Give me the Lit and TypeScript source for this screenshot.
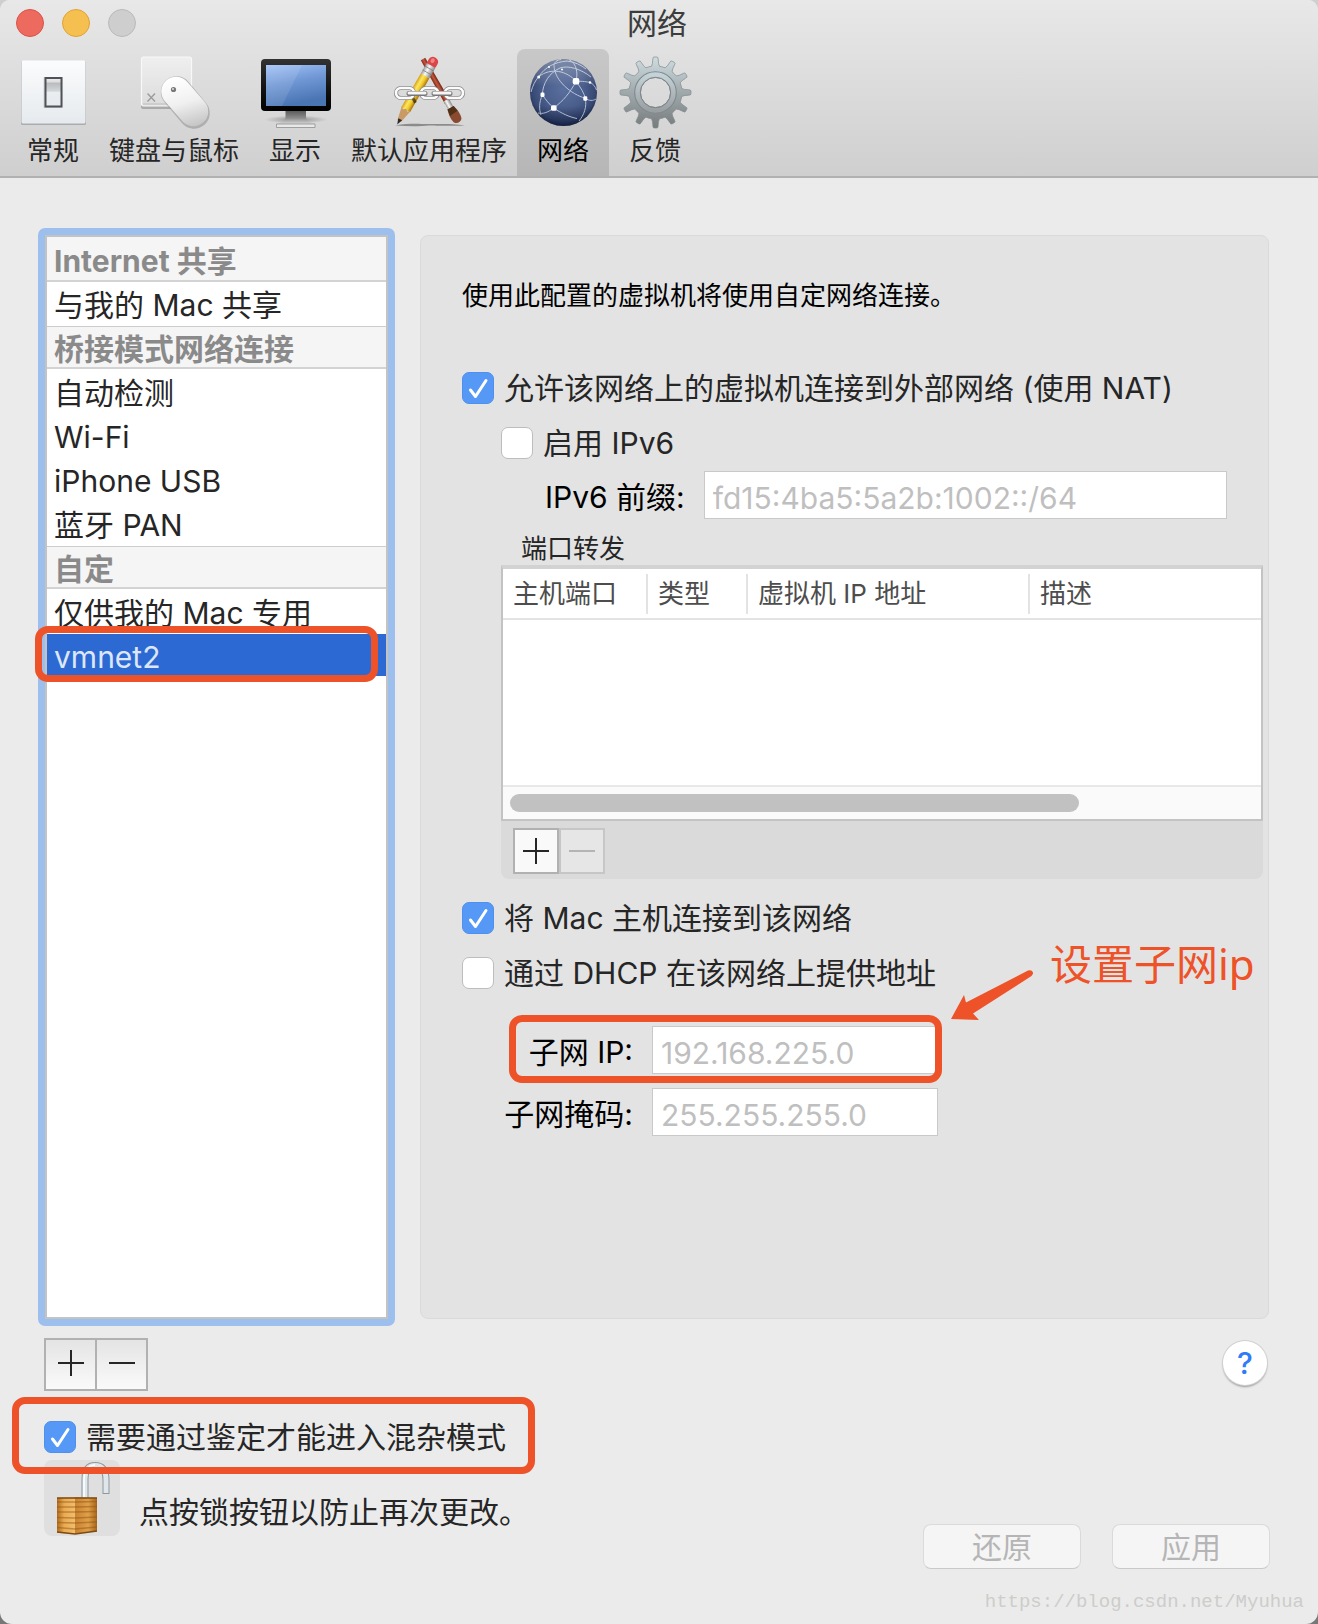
import { LitElement, html, svg, css, nothing, TemplateResult } from "lit";
import { customElement, state } from "lit/decorators.js";
import { classMap } from "lit/directives/class-map.js";

/** Outline of a toothed wheel around (cx, cy). */
function gearPath(cx: number, cy: number, teeth: number, outer: number, inner: number): string {
  const step = (Math.PI * 2) / teeth;
  const at = (r: number, a: number) =>
    `${(cx + r * Math.sin(a)).toFixed(2)} ${(cy - r * Math.cos(a)).toFixed(2)}`;
  let d = "";
  for (let i = 0; i < teeth; i++) {
    const a = i * step;
    d += `${i ? "L" : "M"}${at(inner, a - step * 0.29)}`;
    d += `Q${at(inner + 2, a - step * 0.19)} ${at(outer - 2, a - step * 0.15)}`;
    d += `Q${at(outer, a - step * 0.15)} ${at(outer, a - step * 0.08)}`;
    d += `L${at(outer, a + step * 0.08)}`;
    d += `Q${at(outer, a + step * 0.15)} ${at(outer - 2, a + step * 0.15)}`;
    d += `Q${at(inner + 2, a + step * 0.19)} ${at(inner, a + step * 0.29)}`;
    d += `A${inner} ${inner} 0 0 1 ${at(inner, a + step * 0.71)}`;
  }
  return d + "Z";
}

const icons: Record<string, TemplateResult> = {
  general: svg`
    <defs>
      <linearGradient id="plate" x2="0" y2="1"><stop stop-color="#fbfcfd"/><stop offset="1" stop-color="#e6eaee"/></linearGradient>
      <linearGradient id="rocker" x2="0" y2="1"><stop stop-color="#eeeeee"/><stop offset=".14" stop-color="#dcdcdc"/><stop offset=".18" stop-color="#b9bbbe"/><stop offset=".46" stop-color="#d3d6d9"/><stop offset=".5" stop-color="#e9edf0"/><stop offset="1" stop-color="#e6ebef"/></linearGradient>
    </defs>
    <rect x="4" y="6" width="65" height="64" rx="1.5" fill="#a9adb2"/>
    <rect x="4.500" y="5.500" width="64" height="63" rx="1.500" fill="url(#plate)"/>
    <rect x="26.500" y="22" width="19" height="31" rx="1" fill="#000" opacity=".12"/>
    <rect x="28.500" y="23" width="16" height="28.500" fill="url(#rocker)" stroke="#505257" stroke-width="2"/>`,
  input: svg`
    <defs>
      <linearGradient id="pad" x2="0" y2="1"><stop stop-color="#efefef"/><stop offset="1" stop-color="#dcdcdc"/></linearGradient>
      <linearGradient id="mouse" gradientUnits="userSpaceOnUse" x1="42" y1="22" x2="56" y2="72"><stop stop-color="#fff"/><stop offset=".5" stop-color="#f0f0f0"/><stop offset="1" stop-color="#c4c4c4"/></linearGradient>
    </defs>
    <rect x="3" y="4" width="51" height="50" rx="2" fill="#aaa"/>
    <rect x="3.500" y="2" width="50" height="49" rx="2" fill="url(#pad)" stroke="#f8f8f8" stroke-width="1.200"/>
    <path d="M5 49H52" stroke="#bdbdbd"/>
    <path d="M9.500 38.500l7.500 8M17 38.500l-7.500 8" stroke="#9a9a9a" stroke-width="1.300" fill="none"/>
    <path d="M38.500 37L56 58" stroke="#8e8e8e" stroke-opacity=".55" stroke-width="31.500" stroke-linecap="round"/>
    <path d="M38 36.500L55.500 56.500" stroke="url(#mouse)" stroke-width="29.500" stroke-linecap="round"/>
    <circle cx="35.500" cy="34.500" r="2.600" fill="#777"/><circle cx="35" cy="34" r="1" fill="#ddd"/>`,
  display: svg`
    <defs>
      <linearGradient id="screen" x2=".3" y2="1"><stop stop-color="#a3c3f8"/><stop offset=".5" stop-color="#6f97d4"/><stop offset="1" stop-color="#4a75b4"/></linearGradient>
      <linearGradient id="bezel" x2="0" y2="1"><stop stop-color="#333"/><stop offset=".6" stop-color="#111"/><stop offset="1" stop-color="#000"/></linearGradient>
      <linearGradient id="neck" x2="0" y2="1"><stop stop-color="#555"/><stop offset=".45" stop-color="#8c8c8c"/><stop offset=".75" stop-color="#d0d0d0"/></linearGradient>
      <radialGradient id="footshade"><stop stop-color="#000" stop-opacity=".35"/><stop offset="1" stop-color="#000" stop-opacity="0"/></radialGradient>
    </defs>
    <ellipse cx="37" cy="64.500" rx="32" ry="4" fill="url(#footshade)"/>
    <path d="M26.500 55H47V62C47 66 50 67 56 69V73H17.500V69C23 67 26.500 66 26.500 62Z" fill="url(#neck)"/>
    <path d="M17.500 69H56V72.500H17.500Z" fill="#e8e8e8" stroke="#8f8f8f" stroke-width=".8"/>
    <rect x="2" y="4" width="70" height="52" rx="4" fill="url(#bezel)"/>
    <rect x="7" y="10" width="60" height="41" fill="url(#screen)"/>
    <path d="M7 10H43L23 51H7Z" fill="#fff" opacity=".1"/>`,
  apps: svg`
    <defs>
      <linearGradient id="wood"><stop stop-color="#d99e18"/><stop offset=".35" stop-color="#fbe75e"/><stop offset=".65" stop-color="#f0c92d"/><stop offset="1" stop-color="#a87008"/></linearGradient>
      <linearGradient id="metal"><stop stop-color="#999"/><stop offset=".4" stop-color="#fafafa"/><stop offset="1" stop-color="#888"/></linearGradient>
      <linearGradient id="brush"><stop stop-color="#7a2413"/><stop offset=".5" stop-color="#c4583f"/><stop offset="1" stop-color="#6a1c0e"/></linearGradient>
    </defs>
    <path d="M2 70.500C20 67.500 30 69.500 36 69C45 69.500 55 68 72 70.500C50 71.500 40 70 36 70.500C28 71.500 14 71.500 2 70.500Z" fill="#000" opacity=".35"/>
    <g transform="translate(30 4) rotate(-29.500)">
      <path d="M-2.500 0H2.500L3 50H-3Z" fill="url(#brush)"/>
      <rect x="-3" y="47" width="6" height="10" fill="url(#metal)"/>
      <path d="M-3.500 56H3.500C5.500 62 5.500 68 4 71C2 73.500 -2 73.500 -4 71C-5.500 68 -5.500 62 -3.500 56Z" fill="#8a4a30"/>
      <path d="M-3.500 56H3.500L4.500 62L-4.500 63Z" fill="#4f3018"/>
    </g>
    <g transform="translate(40 7) rotate(29.800)">
      <rect x="-5" y="-5" width="10" height="12" rx="4.500" fill="#dc4547"/>
      <ellipse cx="-1" cy="-1" rx="2" ry="2.500" fill="#f08684"/>
      <rect x="-5" y="4" width="10" height="12" fill="url(#metal)"/>
      <path d="M-5 7.500H5M-5 12H5" stroke="#777" stroke-width=".7"/>
      <path d="M-5 16H5V55H-5Z" fill="url(#wood)"/>
      <path d="M-5 54L-2.500 56L0 54L2.500 56L5 54L2 68H-2Z" fill="#c99a64"/>
      <path d="M-2.200 66H2.200L0 72Z" fill="#2a2a2a"/>
      <path d="M-5 38L5 44" stroke="#000" stroke-width="3" opacity=".55"/>
    </g>
    <g fill="none">
      <g stroke="#8b8b8b" stroke-width="4.200">
        <rect x="3" y="33" width="18" height="10" rx="5"/><rect x="28" y="33" width="17" height="10" rx="5"/><rect x="52" y="33" width="18" height="10" rx="5"/>
      </g>
      <g stroke="#fbfbfb" stroke-width="2.600">
        <rect x="3" y="33" width="18" height="10" rx="5"/><rect x="28" y="33" width="17" height="10" rx="5"/><rect x="52" y="33" width="18" height="10" rx="5"/>
      </g>
      <path d="M16 38.500H32M41 38.500H57" stroke="#777" stroke-width="5" stroke-linecap="round"/>
      <path d="M16 38H32M41 38H57" stroke="#f6f6f6" stroke-width="3" stroke-linecap="round"/>
    </g>`,
  network: svg`
    <defs>
      <radialGradient id="globe" cx=".5" cy=".45" r=".56"><stop stop-color="#5b6f9e"/><stop offset=".55" stop-color="#4a5e8c"/><stop offset=".85" stop-color="#364872"/><stop offset="1" stop-color="#1d2a4a"/></radialGradient>
      <linearGradient id="gloss" x2="0" y2="1"><stop stop-color="#fff" stop-opacity=".35"/><stop offset=".4" stop-color="#fff" stop-opacity="0"/><stop offset=".7" stop-color="#0a1230" stop-opacity="0"/><stop offset="1" stop-color="#0a1230" stop-opacity=".5"/></linearGradient>
    </defs>
    <circle cx="36.500" cy="37.500" r="33.500" fill="url(#globe)"/>
    <circle cx="36.500" cy="37.500" r="33.500" fill="url(#gloss)"/>
    <g fill="none" stroke="#e6ecf8" stroke-width="1" opacity=".7">
      <path d="M49 26.300C43 38 36 46 26.700 53"/>
      <path d="M15.300 39.700C19 45 22 49 26.700 53C34 58 42 62 50 63.500"/>
      <path d="M26.700 53C20 58 16 59 11 58"/>
      <path d="M15.300 39.700C12 48 12 54 14 60"/>
      <path d="M15.300 39.700C16 28 22 18 33 13C41 10 54 14 64 22"/>
      <path d="M49 26.300C54 33 57 38 58.300 43.300C62 46 66 46 69 44"/>
      <path d="M58.300 43.300C44 39 28 26 27 11C27 7 30 5 34 4.500"/>
      <path d="M49 26.300C51 18 50 9 42 4.500"/>
      <path d="M49 26.300C40 16 24 12 11.700 21.700C8 26 6 30 4 37"/>
      <path d="M49 26.300C56 26 60 27 63 27.300C66 29 68 31 69.500 35"/>
      <path d="M11.700 21.700C18 12 28 7 40 6C48 7 54 10 59 14"/>
      <path d="M58.300 43.300C60 52 57 60 52 66"/>
    </g>
    <g fill="#fff">
      <rect x="45.700" y="23" width="6.600" height="6.600" rx="2"/><rect x="56.300" y="41.200" width="4" height="4.600" rx="1.200"/>
      <rect x="13.500" y="37.500" width="4" height="4.500" rx="1.200"/><rect x="24" y="50.300" width="5.600" height="5.400" rx="1.500"/>
      <circle cx="11.700" cy="22" r="1.500"/><circle cx="63" cy="27.500" r="1.200"/><circle cx="22" cy="12" r="1"/><circle cx="35" cy="14.500" r="1"/>
    </g>`,
  feedback: svg`
    <defs>
      <linearGradient id="steel" x2="0" y2="1"><stop stop-color="#cfdde1"/><stop offset=".5" stop-color="#9fa9ac"/><stop offset="1" stop-color="#777b7d"/></linearGradient>
      <linearGradient id="rim" x2="0" y2="1"><stop stop-color="#c5d3d8"/><stop offset="1" stop-color="#9a9fa2"/></linearGradient>
    </defs>
    <path d="${gearPath(36.5, 37.5, 12, 35.5, 26.5)}M36.500 22.500a15 15 0 1 0 0 30a15 15 0 1 0 0-30Z" fill="url(#steel)" fill-rule="evenodd" stroke="#838b8e" stroke-width=".7"/>
    <circle cx="36.500" cy="37.500" r="18" fill="none" stroke="url(#rim)" stroke-width="5"/>
    <circle cx="36.500" cy="37.500" r="20.800" fill="none" stroke="#808a8e" stroke-width="1.100"/>
    <circle cx="36.500" cy="37.500" r="15.200" fill="none" stroke="#7d8588" stroke-width="1"/>`,
};

const tools = [
  { id: "general", label: "常规" },
  { id: "input", label: "键盘与鼠标" },
  { id: "display", label: "显示" },
  { id: "apps", label: "默认应用程序" },
  { id: "network", label: "网络" },
  { id: "feedback", label: "反馈" },
];

const groups = [
  { title: "Internet 共享", items: ["与我的 Mac 共享"] },
  { title: "桥接模式网络连接", items: ["自动检测", "Wi-Fi", "iPhone USB", "蓝牙 PAN"] },
  { title: "自定", items: ["仅供我的 Mac 专用", "vmnet2"] },
];

const plus = html`<svg class="sign" viewBox="0 0 26 26" aria-hidden="true"><path d="M0 13H26M13 0V26" /></svg>`;
const minus = html`<svg class="sign" viewBox="0 0 26 26" aria-hidden="true"><path d="M0 13H26" /></svg>`;

@customElement("app-root")
export class AppRoot extends LitElement {
  static styles = css`
    :host {
      display: block;
      background: linear-gradient(#cfcfcf, #777);
      font-family: Inter, "Noto Sans CJK SC", sans-serif;
      font-size: 30px;
      line-height: 32px;
      color: #262626;
    }
    * { box-sizing: border-box; }
    button, input { font: inherit; color: inherit; margin: 0; padding: 0; border: 0; border-radius: 0; }
    button { background: none; }
    h1, h2, p, ul { margin: 0; padding: 0; font-weight: 400; font-size: inherit; list-style: none; }

    .window {
      display: flex;
      flex-direction: column;
      min-height: 100vh;
      position: relative;
      background: #ebebeb;
      border-radius: 10px 10px 12px 12px;
      overflow: hidden;
    }
    .bar {
      background: linear-gradient(#e8e8e8, #cfcfcf);
      border-bottom: 2px solid #b1b1b1;
    }
    .titlebar {
      display: grid;
      grid-template-columns: 1fr auto 1fr;
      align-items: center;
      height: 46px;
      margin-bottom: 3px;
      padding: 0 20px 0 16px;
    }
    .lights { display: flex; gap: 18px; }
    .light { width: 28px; height: 28px; border-radius: 50%; border: 1px solid #b9b9b9; background: #cecece; }
    .close { background: #ed6a5f; border-color: #dd5147; }
    .minimize { background: #f5c04f; border-color: #dfa334; }
    .title { color: #3c3c3c; }
    .tools { display: flex; padding-left: 7px; }
    .tool {
      display: flex;
      flex-direction: column;
      align-items: center;
      gap: 9px;
      padding: 6px 10px 10px;
      font-size: 26px;
      line-height: 30px;
      border-radius: 8px 8px 0 0;
    }
    .tool svg { width: 72px; height: 72px; overflow: visible; }
    .tool.on { background: linear-gradient(#c8c8c8, #b6b6b6); color: #000; }

    .content { flex: 1; display: flex; gap: 25px; padding: 50px 49px 0 38px; }
    .ring { width: 357px; padding: 7px; background: #9dbfee; border-radius: 7px; }
    .list { height: 100%; background: #fff; border: 2px solid #c3c3c3; }
    .group-title {
      height: 43px;
      margin-bottom: 1px;
      padding: 0 7px;
      line-height: 44px;
      background: #f5f5f5;
      border-top: 1px solid #cdcdcd;
      border-bottom: 2px solid #d3d3d3;
      color: #8a8a8a;
      font-weight: 700;
    }
    .group:first-child .group-title { height: 45px; margin-bottom: 0; border-top-color: #f5f5f5; line-height: 46px; }
    .entry { position: relative; height: 44px; }
    .entry button { display: block; width: 100%; height: 42px; padding: 0 7px; line-height: 46px; text-align: left; }
    .entry.on button { background: #2c69d3; color: #dde6f7; }
    .mark { position: absolute; border: 7px solid #ee5228; border-radius: 13px; pointer-events: none; }
    .mark-entry { inset: -8px 8px -4px -12px; }

    .panel {
      flex: 1;
      min-width: 0;
      margin: 7px 0;
      padding: 42px 5px 0 41px;
      background: #e3e3e3;
      border: 1px solid #dadada;
      border-radius: 8px;
    }
    .intro { margin-bottom: 58px; font-size: 26px; line-height: 36px; color: #000; }
    .check { display: flex; align-items: center; gap: 10px; width: fit-content; }
    .check + .check { margin-top: 23px; }
    .tick { display: grid; flex: none; }
    .tick > * { grid-area: 1 / 1; width: 32px; height: 32px; }
    .tick input { appearance: none; background: #fff; border: 1px solid #bdbdbd; border-radius: 7px; }
    .tick input:checked { background: #5698f5; border-color: #4f90ee; }
    .tick svg { pointer-events: none; fill: none; stroke: #fff; stroke-width: 3; stroke-linecap: round; stroke-linejoin: round; }
    .nested { padding-left: 39px; }
    .check + .nested { margin-top: 23px; }
    .field { display: flex; align-items: center; gap: 19px; color: #000; }
    .field label { padding-top: 4px; }
    .field input {
      height: 48px;
      min-width: 0;
      padding: 6px 8px 0;
      background: #fff;
      border: 1px solid #c9c9c9;
      color: #bfbfbf;
    }
    .prefix { margin: 12px 36px 14px 44px; }
    .prefix input { flex: 1; }
    .caption { padding-left: 20px; font-size: 26px; line-height: 32px; }
    .ports { margin-bottom: 23px; background: #dadada; border-radius: 8px; }
    .grid { border: solid #c3c3c3; border-width: 4px 2px 2px; border-top-color: #d2d2d2; background: #fff; }
    table { width: 100%; border-collapse: collapse; table-layout: fixed; font-size: 26px; color: #4d4d4d; }
    thead { border-bottom: 2px solid #e3e3e3; }
    th { height: 50px; padding: 0; font-weight: 400; text-align: left; }
    th span { display: block; padding: 0 0 0 10px; line-height: 40px; white-space: nowrap; border-right: 2px solid #e3e3e3; }
    th:last-child span { border-right: 0; }
    .w-port { width: 145px; }
    .w-type { width: 100px; }
    .w-addr { width: 282px; }
    .blank td { height: 166px; padding: 0; }
    .track { height: 34px; padding: 7px; background: #fafafa; border-top: 2px solid #e8e8e8; }
    .thumb { width: calc(100% * 13 / 17); height: 18px; border-radius: 9px; background: #c1c1c1; }
    .pair { display: flex; }
    .pair button { display: grid; place-items: center; border: 2px solid #b1b1b1; background: linear-gradient(#e4e4e4, #fafafa); }
    .large button + button { margin-left: -2px; }
    .sign { width: 26px; height: 26px; fill: none; stroke: #262626; stroke-width: 2; }
    .small { padding: 7px 12px 5px; }
    .small button { width: 46px; height: 46px; background: #f9f9f9; }
    .small button:disabled { border-color: #c6c6c6; background: #e6e6e6; }
    .small button:disabled .sign { stroke: #b4b4b4; }
    .subnet { position: relative; width: 476px; display: grid; gap: 14px; margin-top: 37px; }
    .subnet .field { justify-content: flex-end; }
    .subnet input { width: 286px; }
    .mark-subnet { inset: -11px -4px 53px 47px; }
    .arrow { position: absolute; left: 487px; top: -59px; width: 86px; height: 54px; fill: #ee5228; }
    .note {
      position: absolute;
      left: 588px;
      top: -87px;
      font: 42px/50px "Noto Sans", "Noto Sans CJK SC", sans-serif;
      color: #ee5228;
      white-space: nowrap;
    }

    .footer { display: flex; justify-content: space-between; padding: 12px 48px 0 44px; }
    .left { display: flex; flex-direction: column; align-items: flex-start; padding-bottom: 88px; }
    .large button { width: 53px; height: 53px; padding-bottom: 4px; }
    .promiscuous { position: relative; margin: 30px 0 7px; }
    .mark-promiscuous { inset: -24px -29px -21px -32px; }
    .locking { display: flex; align-items: flex-end; gap: 19px; }
    .lock { width: 76px; height: 76px; border-radius: 8px; background: #dfdfdf; }
    .lock svg { display: block; width: 76px; height: 76px; }
    .locking p { line-height: 48px; }
    .right { display: flex; flex-direction: column; justify-content: space-between; align-items: flex-end; padding-bottom: 55px; }
    .help {
      width: 44px;
      height: 44px;
      margin: 3px 3px 0 0;
      border-radius: 50%;
      background: #fff;
      box-shadow: 0 0 0 1px #d0d0d0, 0 2px 2px #999;
      color: #2f7cf6;
      font-weight: 500;
    }
    .actions { display: flex; gap: 31px; }
    .actions button {
      width: 158px;
      height: 45px;
      background: #f5f5f5;
      border: 1px solid #dadada;
      border-bottom-color: #c9c9c9;
      border-radius: 8px;
      color: #b5b5b5;
    }
    .watermark {
      position: absolute;
      right: 14px;
      bottom: 10px;
      font: 19px/24px "Liberation Mono", monospace;
      color: #cdcdca;
    }
  `;

  @state() private tool = "network";
  @state() private network = "vmnet2";

  private check(label: string, checked: boolean, extra: unknown = nothing, cls = "") {
    return html`<label class="check ${cls}">
      <span class="tick">
        <input type="checkbox" .checked=${checked} />
        ${checked ? html`<svg viewBox="0 0 32 32" aria-hidden="true"><path d="M8.500 18L13.500 24.500L24 8.500" /></svg>` : nothing}
      </span>
      <span>${label}</span>${extra}
    </label>`;
  }

  private renderBar() {
    return html`<header class="bar">
      <div class="titlebar">
        <div class="lights">
          <button class="light close" aria-label="关闭"></button>
          <button class="light minimize" aria-label="最小化"></button>
          <button class="light" aria-label="缩放" disabled></button>
        </div>
        <h1 class="title">网络</h1>
      </div>
      <nav class="tools">
        ${tools.map(
          (t) => html`<button class=${classMap({ tool: true, on: t.id === this.tool })} @click=${() => (this.tool = t.id)}>
            <svg viewBox="0 0 72 72" aria-hidden="true">${icons[t.id]}</svg>
            <span>${t.label}</span>
          </button>`
        )}
      </nav>
    </header>`;
  }

  private renderList() {
    return html`<div class="ring">
      <div class="list">
        ${groups.map(
          (g) => html`<section class="group">
            <h2 class="group-title">${g.title}</h2>
            <ul>
              ${g.items.map(
                (name) => html`<li class=${classMap({ entry: true, on: name === this.network })}>
                  <button @click=${() => (this.network = name)}>${name}</button>
                  ${name === "vmnet2" ? html`<span class="mark mark-entry"></span>` : nothing}
                </li>`
              )}
            </ul>
          </section>`
        )}
      </div>
    </div>`;
  }

  private renderPanel() {
    return html`<main class="panel">
      <p class="intro">使用此配置的虚拟机将使用自定网络连接。</p>
      ${this.check("允许该网络上的虚拟机连接到外部网络 (使用 NAT)", true)}
      <div class="nested">
        ${this.check("启用 IPv6", false)}
        <div class="field prefix">
          <label for="prefix">IPv6 前缀:</label>
          <input id="prefix" type="text" value="fd15:4ba5:5a2b:1002::/64" disabled />
        </div>
        <p class="caption" id="ports">端口转发</p>
        <div class="ports">
          <div class="grid">
            <table aria-labelledby="ports">
              <thead>
                <tr>
                  <th class="w-port"><span>主机端口</span></th>
                  <th class="w-type"><span>类型</span></th>
                  <th class="w-addr"><span>虚拟机 IP 地址</span></th>
                  <th><span>描述</span></th>
                </tr>
              </thead>
              <tbody><tr class="blank"><td colspan="4"></td></tr></tbody>
            </table>
            <div class="track"><div class="thumb"></div></div>
          </div>
          <div class="pair small">
            <button aria-label="添加端口">${plus}</button>
            <button aria-label="移除端口" disabled>${minus}</button>
          </div>
        </div>
      </div>
      ${this.check("将 Mac 主机连接到该网络", true)}
      ${this.check("通过 DHCP 在该网络上提供地址", false)}
      <div class="subnet">
        <div class="field">
          <label for="subnet">子网 IP:</label>
          <input id="subnet" type="text" value="192.168.225.0" disabled />
        </div>
        <div class="field">
          <label for="mask">子网掩码:</label>
          <input id="mask" type="text" value="255.255.255.0" disabled />
        </div>
        <span class="mark mark-subnet"></span>
        <svg class="arrow" viewBox="0 0 86 54" aria-hidden="true">
          <path d="M2 52L15 28L17 35.500L79 3.500Q83 2.500 84 5.500Q84.500 7 82.500 9L24 46.500L30 53Z" />
        </svg>
        <span class="note">设置子网ip</span>
      </div>
    </main>`;
  }

  private renderFooter() {
    return html`<footer class="footer">
      <div class="left">
        <div class="pair large">
          <button aria-label="添加网络">${plus}</button>
          <button aria-label="移除网络">${minus}</button>
        </div>
        ${this.check("需要通过鉴定才能进入混杂模式", true, html`<span class="mark mark-promiscuous"></span>`, "promiscuous")}
        <div class="locking">
          <button class="lock" aria-label="锁定">
            <svg viewBox="0 0 76 76" aria-hidden="true">
              <defs>
                <linearGradient id="front"><stop stop-color="#b06b1c"/><stop offset=".4" stop-color="#e9ab52"/><stop offset="1" stop-color="#f3bd6c"/></linearGradient>
                <linearGradient id="side"><stop stop-color="#c98230"/><stop offset=".6" stop-color="#e0a04a"/><stop offset="1" stop-color="#a8651a"/></linearGradient>
              </defs>
              <path d="M41 38V19C41 9 45 5.500 51 5.500C58 5.500 62 10 62 20V34" fill="none" stroke="#8d989e" stroke-width="7"/>
              <path d="M41 38V19C41 9 45 5.500 51 5.500C58 5.500 62 10 62 20V33" fill="none" stroke="#dfe7ea" stroke-width="5"/>
              <path d="M40 38V20C40 10 45 5 51 5" fill="none" stroke="#fff" stroke-width="1.500"/>
              <path d="M13 38L31 37V74L15 73Q13 73 13 71Z" fill="url(#front)"/>
              <path d="M31 37L53 38V71L31 74Z" fill="url(#side)"/>
              <path d="M13 42L31 42L53 41.500M13 47L31 47L53 46.500M13 52L31 52L53 51.500M13 57.500L31 58L53 57M13 62.500L31 63L53 62M13 67.500L31 69L53 67" fill="none" stroke="#8f5514" stroke-width="1.300" opacity=".5"/>
              <path d="M13 38H53" stroke="#7c4a12" stroke-width="1.500"/>
              <path d="M13 72L31 74L53 71" fill="none" stroke="#7c4a12" stroke-width="1.500"/>
            </svg>
          </button>
          <p>点按锁按钮以防止再次更改。</p>
        </div>
      </div>
      <div class="right">
        <button class="help" aria-label="帮助">?</button>
        <div class="actions">
          <button disabled>还原</button>
          <button disabled>应用</button>
        </div>
      </div>
      <span class="watermark">https://blog.csdn.net/Myuhua</span>
    </footer>`;
  }

  render() {
    return html`<div class="window">
      ${this.renderBar()}
      <div class="content">${this.renderList()}${this.renderPanel()}</div>
      ${this.renderFooter()}
    </div>`;
  }
}
